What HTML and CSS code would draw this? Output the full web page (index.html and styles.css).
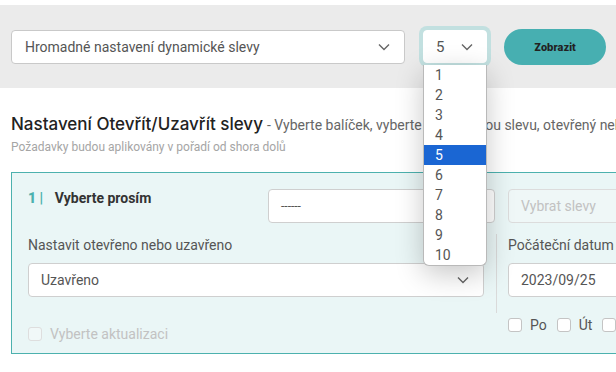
FILE: index.html
```html
<!DOCTYPE html>
<html lang="cs">

<head>
  <meta charset="UTF-8">
  <meta name="viewport" content="width=device-width, initial-scale=1.0">
  <title>Nastavení slevy</title>
  <link rel="stylesheet" href="styles.css">
</head>

<body>
  <div class="stranka">
    <div class="lista">
      <div class="vyber hlavni">
        <span>Hromadné nastavení dynamické slevy</span>
        <svg class="sipka" width="12" height="8" viewBox="0 0 12 8"><polyline points="1,1.5 6,6.5 11,1.5" fill="none" stroke="#666" stroke-width="1.4"/></svg>
      </div>
      <div class="vyber pocet">
        <span>5</span>
        <svg class="sipka" width="12" height="8" viewBox="0 0 12 8"><polyline points="1,1.5 6,6.5 11,1.5" fill="none" stroke="#666" stroke-width="1.4"/></svg>
        <ul class="seznam">
          <li>1</li>
          <li>2</li>
          <li>3</li>
          <li>4</li>
          <li class="vybrano">5</li>
          <li>6</li>
          <li>7</li>
          <li>8</li>
          <li>9</li>
          <li>10</li>
        </ul>
      </div>
      <button class="zobrazit">Zobrazit</button>
    </div>

    <div class="nadpis">
      <h1>Nastavení Otevřít/Uzavřít slevy</h1>
      <span class="popis">- Vyberte balíček, vyberte dynamickou slevu, otevřený nebo uzavřený stav</span>
    </div>
    <p class="pozn">Požadavky budou aplikovány v pořadí od shora dolů</p>

    <div class="karta">
      <div class="radek">
        <div class="cislo"><b>1 |</b> Vyberte prosím</div>
        <div class="pole balicek">------</div>
        <div class="pole neaktivni">Vybrat slevy</div>
      </div>
      <div class="radek dolni">
        <div class="sloupec levy">
          <p class="stitek">Nastavit otevřeno nebo uzavřeno</p>
          <div class="pole stav">
            <span>Uzavřeno</span>
            <svg class="sipka" width="12" height="8" viewBox="0 0 12 8"><polyline points="1,1.5 6,6.5 11,1.5" fill="none" stroke="#666" stroke-width="1.4"/></svg>
          </div>
          <label class="zaskrt neaktivni-text"><span class="box"></span>Vyberte aktualizaci</label>
        </div>
        <div class="delitko"></div>
        <div class="sloupec pravy">
          <p class="stitek">Počáteční datum</p>
          <div class="pole datum">2023/09/25</div>
          <div class="dny">
            <label class="zaskrt"><span class="box"></span>Po</label>
            <label class="zaskrt"><span class="box"></span>Út</label>
            <label class="zaskrt"><span class="box"></span>St</label>
          </div>
        </div>
      </div>
    </div>
  </div>
</body>

</html>
```

FILE: styles.css
```css
html,
body {
  margin: 0;
  overflow: hidden;
  background-color: #fff;
}

body {
  font-family: Roboto, "Liberation Sans", sans-serif;
  color: #555;
  font-size: 14px;
}

.stranka {
  width: 820px;
  padding-top: 5px;
}

.lista {
  display: flex;
  align-items: center;
  background-color: #ebebeb;
  height: 83px;
  padding-left: 11px;
}

.vyber {
  display: flex;
  align-items: center;
  justify-content: space-between;
  box-sizing: border-box;
  background-color: #fff;
  border: 1px solid #c9c9c9;
  border-radius: 4px;
  height: 34px;
}

.hlavni {
  width: 394px;
  padding: 0 14px 0 13px;
}

.pocet {
  position: relative;
  width: 64px;
  height: 33px;
  margin-left: 18px;
  padding: 0 13px 0 12px;
  border-color: #fff;
  box-shadow: 0 0 0 4px #c2e0e0;
}

.pocet > span {
  font-size: 15px;
}

.sipka {
  display: block;
}

.seznam {
  position: absolute;
  top: 34px;
  left: -1px;
  width: 64px;
  margin: 0;
  padding: 0;
  list-style: none;
  background-color: #fff;
  border: 1px solid #b9b9b9;
  border-top: none;
  border-radius: 0 0 6px 6px;
  box-sizing: border-box;
  box-shadow: 0 8px 28px rgba(0, 0, 0, 0.22);
  z-index: 5;
}

.seznam li {
  height: 20px;
  line-height: 20px;
  padding-left: 11px;
  font-size: 14px;
}

.seznam .vybrano {
  background-color: #1a66d3;
  color: #fff;
}

.zobrazit {
  width: 102px;
  height: 36px;
  margin-left: 17px;
  border: none;
  border-radius: 18px;
  background-color: #47afb1;
  color: #222;
  font-family: Inter, sans-serif;
  font-weight: 800;
  font-size: 10px;
}

.nadpis {
  display: flex;
  align-items: baseline;
  white-space: nowrap;
  margin: 26px 0 0 11px;
}

h1 {
  margin: 0;
  font-family: Inter, sans-serif;
  font-weight: 500;
  font-size: 17px;
  color: #222;
  letter-spacing: 0;
}

.popis {
  margin-left: 4px;
  font-size: 14px;
  color: #666;
}

.pozn {
  margin: 6px 0 0 11px;
  font-size: 12px;
  color: #a5a5a5;
}

.karta {
  margin: 18px 0 0 11px;
  height: 164px;
  padding: 16px 0 0 16px;
  background-color: #eaf6f6;
  border: 1px solid #4cb1ae;
}

.radek {
  display: flex;
}

.cislo {
  width: 240px;
  padding-top: 1px;
  font-size: 14px;
  font-weight: bold;
  color: #333;
}

.cislo b {
  color: #4cb1ae;
  margin-right: 8px;
}

.pole {
  box-sizing: border-box;
  height: 34px;
  display: flex;
  align-items: center;
  background-color: #fff;
  border: 1px solid #cfcfcf;
  border-radius: 4px;
  padding: 0 12px;
  color: #555;
}

.balicek {
  width: 227px;
  font-size: 12px;
}

.neaktivni {
  width: 200px;
  margin-left: 13px;
  background-color: #eff7f7;
  border-color: #dcdcdc;
  color: #c2c2c2;
}

.dolni {
  margin-top: 12px;
}

.sloupec {
  display: flex;
  flex-direction: column;
}

.levy {
  width: 456px;
}

.pravy {
  width: 200px;
  padding-left: 11px;
}

.stitek {
  margin: 0 0 8px 0;
  line-height: 20px;
}

.stav {
  justify-content: space-between;
  padding-right: 14px;
}

.delitko {
  width: 1px;
  height: 79px;
  margin: -1px 0 0 12px;
  background-color: #dadada;
}

.zaskrt {
  display: flex;
  align-items: center;
  line-height: 20px;
}

.box {
  display: inline-block;
  width: 12px;
  height: 12px;
  margin-right: 8px;
  background-color: #fff;
  border: 1px solid #c4c4c4;
  border-radius: 3px;
}

.levy .zaskrt {
  margin-top: 27px;
}

.neaktivni-text {
  color: #c2c2c2;
}

.neaktivni-text .box {
  border-color: #dedede;
  background-color: #f1f8f8;
}

.dny {
  display: flex;
  gap: 10px;
  margin-top: 18px;
}
```
